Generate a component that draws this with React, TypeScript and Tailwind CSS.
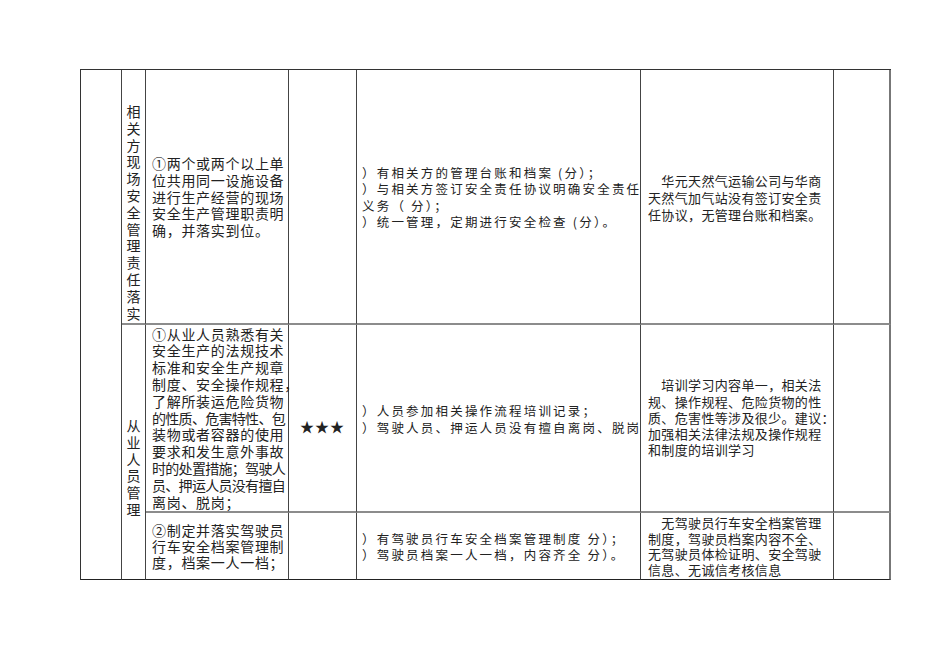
import React from 'react'

const font = { fontFamily: '"Noto Sans CJK SC", "Noto Sans", sans-serif' }

// 一行一行地写出来, 与原件的换行保持一致
function Lines({ lines, className = '' }: { lines: string[]; className?: string }) {
  return (
    <div className={className}>
      {lines.map((l, i) => (
        <div key={i} className="whitespace-nowrap">
          {l}
        </div>
      ))}
    </div>
  )
}

function Vertical({ text, className = '' }: { text: string; className?: string }) {
  return (
    <div className={`flex flex-col items-center ${className}`}>
      {text.split('').map((c, i) => (
        <span key={i} className="block leading-[16.8px]">
          {c}
        </span>
      ))}
    </div>
  )
}

const rowLine = 'border-b-2 border-b-[#8c8c8c]'
const lastLine = 'border-b border-b-[#222]'
const vLine = 'border-r border-r-[#444]'

export default function App() {
  return (
    <div className="min-h-screen bg-white text-[#222]" style={font}>
      <div className="pl-[80px] pt-[69px]">
        <div className="grid w-fit grid-cols-[41px_24px_143px_68px_284px_193px_57px] grid-rows-[255px_188px_67px] border-l border-t border-[#333]">
          {/* 左边空列 */}
          <div className={`row-span-3 ${vLine} ${lastLine}`} />

          {/* 第一行 */}
          <div className={`${vLine} ${rowLine} pt-[33px] text-[14px]`}>
            <Vertical text="相关方现场安全管理责任落实" />
          </div>
          <div className={`${vLine} ${rowLine} flex items-center pl-[6px] pt-[1px] text-[14px] leading-[16.8px] tracking-[0.7px]`}>
            <Lines
              lines={[
                '①两个或两个以上单',
                '位共用同一设施设备',
                '进行生产经营的现场',
                '安全生产管理职责明',
                '确，并落实到位。',
              ]}
            />
          </div>
          <div className={`${vLine} ${rowLine}`} />
          <div className={`${vLine} ${rowLine} flex items-center pl-[5px] pt-[2px] text-[12.5px] leading-[16.5px] tracking-[2.2px]`}>
            <Lines
              lines={[
                '）有相关方的管理台账和档案 (分）；',
                '）与相关方签订安全责任协议明确安全责任',
                '义务（ 分）；',
                '）统一管理，定期进行安全检查 (分）。',
              ]}
            />
          </div>
          <div className={`${vLine} ${rowLine} flex items-center pl-[7px] pt-[2px] text-[13px] leading-[17px] tracking-[0.35px]`}>
            <Lines
              lines={[
                '\u3000华元天然气运输公司与华商',
                '天然气加气站没有签订安全责',
                '任协议，无管理台账和档案。',
              ]}
            />
          </div>
          <div className={`border-r-2 border-r-[#777] ${rowLine}`} />

          {/* 从业人员管理 */}
          <div className={`row-span-2 ${vLine} ${lastLine} pt-[92px] text-[14px]`}>
            <Vertical text="从业人员管理" />
          </div>

          {/* 第二行 */}
          <div className={`${vLine} ${rowLine} flex items-center pl-[6px] text-[14px] leading-[16.8px] tracking-[0.7px]`}>
            <div>
              <div className="whitespace-nowrap">①从业人员熟悉有关</div>
              <div className="whitespace-nowrap">安全生产的法规技术</div>
              <div className="whitespace-nowrap">标准和安全生产规章</div>
              <div className="whitespace-nowrap">制度、安全操作规程，</div>
              <div className="whitespace-nowrap">了解所装运危险货物</div>
              <div className="whitespace-nowrap tracking-[-0.7px]">的性质、危害特性、包</div>
              <div className="whitespace-nowrap">装物或者容器的使用</div>
              <div className="whitespace-nowrap">要求和发生意外事故</div>
              <div className="whitespace-nowrap tracking-[-0.7px]">时的处置措施；驾驶人</div>
              <div className="whitespace-nowrap tracking-[-0.7px]">员、押运人员没有擅自</div>
              <div className="whitespace-nowrap">离岗、脱岗；</div>
            </div>
          </div>
          <div className={`${vLine} ${rowLine} flex items-center justify-center pt-[16px] text-[14px] tracking-[1px]`}>
            ★★★
          </div>
          <div className={`${vLine} ${rowLine} relative z-10 flex items-center pl-[5px] pt-[3px] text-[12.5px] leading-[16.5px] tracking-[2.2px]`}>
            <Lines
              lines={[
                '）人员参加相关操作流程培训记录；',
                '）驾驶人员、押运人员没有擅自离岗、脱岗',
              ]}
            />
          </div>
          <div className={`${vLine} ${rowLine} flex items-center pl-[7px] text-[13px] leading-[16.2px] tracking-[0.35px]`}>
            <Lines
              lines={[
                '\u3000培训学习内容单一，相关法',
                '规、操作规程、危险货物的性',
                '质、危害性等涉及很少。建议：',
                '加强相关法律法规及操作规程',
                '和制度的培训学习',
              ]}
            />
          </div>
          <div className={`border-r-2 border-r-[#777] ${rowLine}`} />

          {/* 第三行 */}
          <div className={`${vLine} ${lastLine} flex items-center pl-[6px] text-[14px] leading-[16.2px] tracking-[0.7px]`}>
            <Lines lines={['②制定并落实驾驶员', '行车安全档案管理制', '度，档案一人一档；']} />
          </div>
          <div className={`${vLine} ${lastLine}`} />
          <div className={`${vLine} ${lastLine} flex items-center pl-[5px] pt-[2px] text-[12.5px] leading-[16.5px] tracking-[2.2px]`}>
            <Lines
              lines={[
                '）有驾驶员行车安全档案管理制度 分）；',
                '）驾驶员档案一人一档，内容齐全 分）。',
              ]}
            />
          </div>
          <div className={`${vLine} ${lastLine} pl-[7px] pt-[2px] text-[13px] leading-[15.5px] tracking-[0.35px]`}>
            <Lines
              lines={[
                '\u3000无驾驶员行车安全档案管理',
                '制度，驾驶员档案内容不全、',
                '无驾驶员体检证明、安全驾驶',
                '信息、无诚信考核信息',
              ]}
            />
          </div>
          <div className={`border-r-2 border-r-[#777] ${lastLine}`} />
        </div>
      </div>
    </div>
  )
}
